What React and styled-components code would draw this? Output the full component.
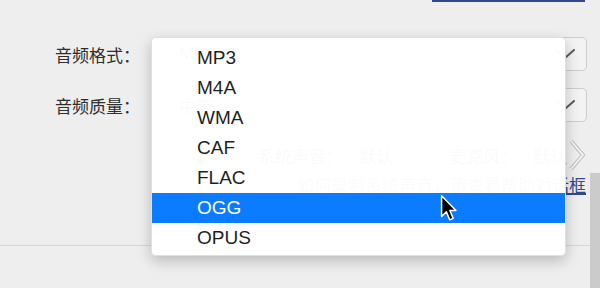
import React from "react";
import styled, { createGlobalStyle } from "styled-components";

const GlobalStyle = createGlobalStyle`
  html, body {
    margin: 0;
    padding: 0;
    background: #eeeeee;
    overflow: hidden;
  }
  body {
    font-family: "Liberation Sans", "Noto Sans CJK SC", sans-serif;
  }
`;

const formats = ["MP3", "M4A", "WMA", "CAF", "FLAC", "OGG", "OPUS"];

const App = () => {
  return (
    <Page>
      <GlobalStyle />
      <Main>
        <TopLink>
          <Link>打开录音文件夹位置</Link>
        </TopLink>

        <Form>
          <Row>
            <Label>音频格式：</Label>
            <Select>
              <Value>MP3</Value>
              <Chevron />
            </Select>
          </Row>
          <Row>
            <Label>音频质量：</Label>
            <Select>
              <Value>中等</Value>
              <Chevron />
            </Select>
          </Row>
        </Form>

        <DeviceRow>
          <DeviceLabel>系统声音：</DeviceLabel>
          <DeviceValue>默认</DeviceValue>
          <DeviceLabel $wide>麦克风：</DeviceLabel>
          <DeviceValue>默认</DeviceValue>
          <MoreArrow>
            <svg width="16" height="32" viewBox="0 0 16 32">
              <polyline
                points="2,2 14,16 2,30"
                fill="none"
                stroke="#c4c4c4"
                strokeWidth="4"
                strokeLinejoin="miter"
              />
              <polyline
                points="2,2 14,16 2,30"
                fill="none"
                stroke="#f7f7f7"
                strokeWidth="1.6"
              />
            </svg>
          </MoreArrow>
        </DeviceRow>

        <HelpRow>
          <Link>如何录制系统声音，请查看帮助对话框</Link>
        </HelpRow>

        <Footer />
      </Main>
      <Gutter>
        <GutterBar />
      </Gutter>

      <Menu>
        {formats.map((f) => (
          <MenuItem key={f} $active={f === "OGG"}>
            {f}
          </MenuItem>
        ))}
      </Menu>

      <Cursor>
        <svg width="17" height="30" viewBox="0 0 16 28">
          <path
            d="M1.5 1.5 L1.5 21 L6 16.6 L9.2 24.2 L12.4 22.8 L9.3 15.4 L15 15.4 Z"
            fill="#000"
            stroke="#fff"
            strokeWidth="1.4"
            strokeLinejoin="round"
          />
        </svg>
      </Cursor>
    </Page>
  );
};

const Chevron = () => (
  <ChevronIcon width="20" height="12" viewBox="0 0 20 12">
    <polyline
      points="1,2 10,10 19,2"
      fill="none"
      stroke="#5a5a5a"
      strokeWidth="2"
      strokeLinecap="round"
    />
  </ChevronIcon>
);

const Page = styled.div`
  position: relative;
  display: flex;
  width: 600px;
  height: 288px;
  overflow: hidden;
  color: #333;
`;

const Main = styled.div`
  width: 590px;
  display: flex;
  flex-direction: column;
`;

const TopLink = styled.div`
  margin-top: -17px;
  height: 20px;
  padding-right: 5px;
  text-align: right;
  font-size: 17px;
  line-height: 18px;
`;

const Link = styled.span`
  color: #2f4a8c;
  text-decoration: underline;
  text-decoration-thickness: 2px;
  font-family: "Noto Sans CJK SC", sans-serif;
`;

const Form = styled.div`
  display: flex;
  flex-direction: column;
  gap: 17px;
  margin-top: 34px;
  padding-left: 55px;
`;

const Row = styled.div`
  display: flex;
  align-items: center;
  height: 34px;
`;

const Label = styled.span`
  width: 108px;
  font-family: "Noto Sans CJK SC", sans-serif;
  font-size: 17px;
  color: #2e2e2e;
`;

const Select = styled.div`
  box-sizing: border-box;
  width: 424px;
  height: 34px;
  display: flex;
  align-items: center;
  justify-content: space-between;
  padding: 0 11px 0 15px;
  border: 1px solid #cdcdcd;
  border-radius: 5px;
  background: #f3f3f3;
`;

const Value = styled.span`
  font-size: 17px;
  color: #333;
  font-family: "Liberation Sans", "Noto Sans CJK SC", sans-serif;
`;

const ChevronIcon = styled.svg`
  display: block;
`;

const DeviceRow = styled.div`
  display: flex;
  align-items: center;
  height: 30px;
  margin-top: 18px;
  padding-left: 258px;
  font-family: "Noto Sans CJK SC", sans-serif;
  font-size: 17px;
  color: #333;
`;

const DeviceLabel = styled.span`
  margin-left: ${(p) => (p.$wide ? "56px" : "0")};
`;

const DeviceValue = styled.span`
  margin-left: 16px;
`;

const MoreArrow = styled.span`
  display: flex;
  margin-left: 2px;
`;

const HelpRow = styled.div`
  margin-top: 3px;
  padding-right: 4px;
  text-align: right;
  font-size: 17px;
  line-height: 24px;
`;

const Footer = styled.div`
  margin-top: 46px;
  border-top: 1px solid #d6d6d6;
  flex: 1;
`;

const Gutter = styled.div`
  flex: 1;
  display: flex;
  flex-direction: column;
`;

const GutterBar = styled.div`
  margin-top: 173px;
  flex: 1;
  background: #cbcbcb;
`;

const Menu = styled.div`
  position: absolute;
  left: 151px;
  top: 37px;
  width: 415px;
  box-sizing: border-box;
  padding: 5px 0 2px;
  background: rgba(255, 255, 255, 0.975);
  border: 1px solid rgba(0, 0, 0, 0.12);
  border-radius: 5px;
  box-shadow: 0 5px 14px rgba(0, 0, 0, 0.22);
`;

const MenuItem = styled.div`
  height: 30px;
  line-height: 30px;
  padding-left: 45px;
  font-size: 19px;
  color: ${(p) => (p.$active ? "#fff" : "#1f1f1f")};
  background: ${(p) => (p.$active ? "#0b7bff" : "transparent")};
`;

const Cursor = styled.div`
  position: absolute;
  left: 440px;
  top: 194px;
  display: flex;
`;

export default App;
